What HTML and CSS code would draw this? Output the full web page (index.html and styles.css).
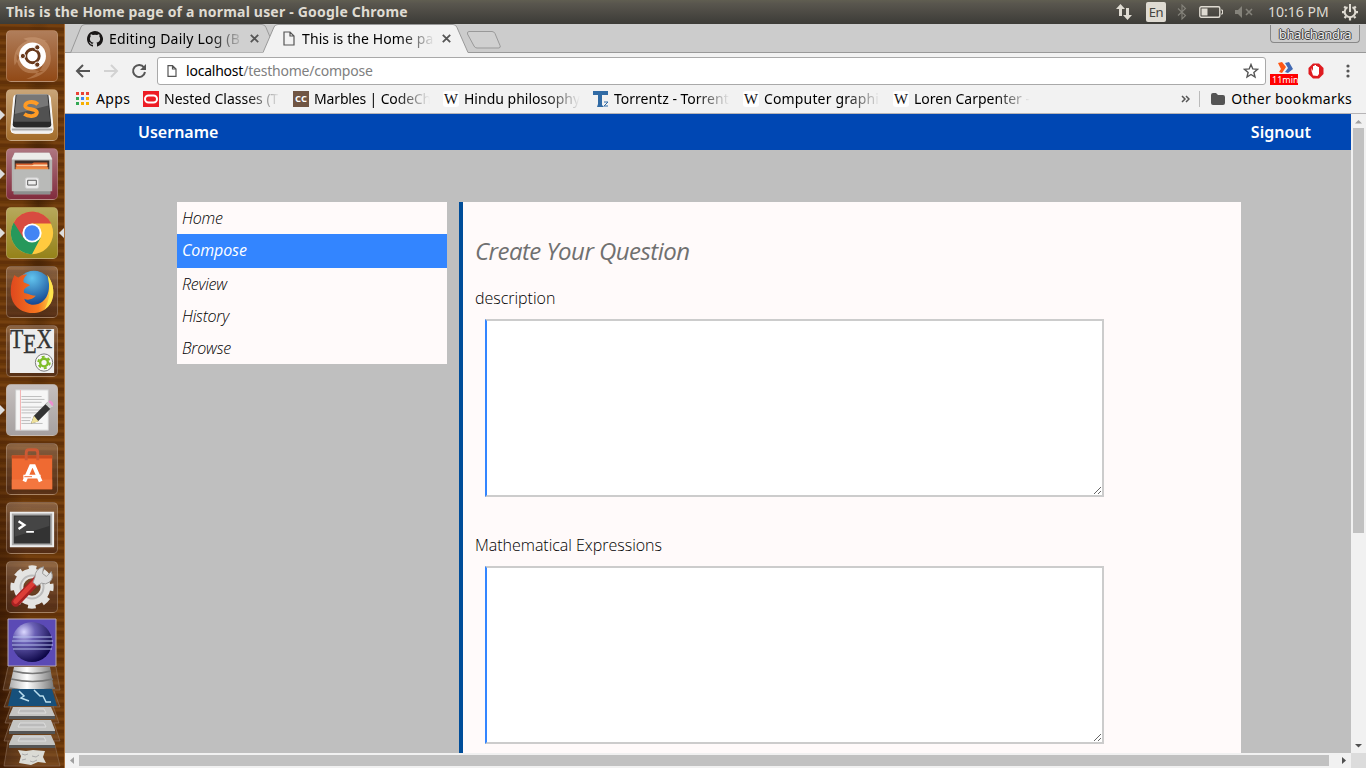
FILE: index.html
```html
<!DOCTYPE html>
<html lang="en">
<head>
<meta charset="utf-8">
<title>This is the Home page of a normal user</title>
<link rel="stylesheet" href="styles.css">
</head>
<body>
<div class="panel">
  <span class="panel-title">This is the Home page of a normal user - Google Chrome</span>
  <div class="indicators">
    <svg class="ind-net" width="18" height="18" viewBox="0 0 18 18"><path d="M5.500 1 1 6h3v7h3V6h3zM12.500 17 17 12h-3V5h-3v7H8z" fill="#dfdbd2"/></svg>
    <span class="lang">En</span>
    <svg class="ind-bt" width="10" height="16" viewBox="0 0 10 16"><path d="M1 4.500 8.500 11.500 5 15V1l3.500 3.500L1 11.500" fill="none" stroke="#85837b" stroke-width="1.100"/></svg>
    <svg class="ind-bat" width="24" height="12" viewBox="0 0 24 12"><rect x=".8" y=".8" width="20" height="10.400" rx="1.500" fill="none" stroke="#dfdbd2" stroke-width="1.400"/><path d="M2.500 2.500h6v7h-6z" fill="#dfdbd2"/><path d="M22 4h1.500v4H22" fill="none" stroke="#dfdbd2"/></svg>
    <svg class="ind-vol" width="18" height="12" viewBox="0 0 18 12"><path d="M0 4h3l4-4v12l-4-4H0z" fill="#85837b"/><path d="m11 3 6 6m0-6-6 6" stroke="#85837b" stroke-width="1.600"/></svg>
    <span class="clock">10:16 PM</span>
    <svg class="ind-gear" width="18" height="18" viewBox="0 0 18 18" fill="none" stroke="#dfdbd2"><path d="M6.500 4.200a5.300 5.300 0 1 0 5 0M9 1v8" stroke-width="2"/><path d="M9 15v2.500M1 9.200h2.200M14.800 9.200H17M3.500 15l1.600-1.600M13 13.400l1.500 1.600M3.200 3.500l1.700 1.700M14.800 3.500l-1.700 1.700" stroke-width="2.200"/></svg>
  </div>
</div>
<div class="desktop">
  <aside class="launcher">
    <svg class="tile t-dash" viewBox="0 0 52 52"><path d="M8 36C4 16 20 4 42 10 28 10 22 14 17 20M42 16c10 18-2 32-22 34 12-5 18-10 18-20M10 24c-1 16 9 24 28 18-10-1-17-3-21-9M17 8c20-6 32 6 27 22-1-8-6-13-13-15" fill="#ecc09b" opacity=".3"/><circle cx="26.500" cy="26" r="14" fill="#fff"/><circle cx="26.500" cy="26" r="7" fill="none" stroke="#68391c" stroke-width="3"/><g fill="#68391c" stroke="#fff"><circle cx="16.500" cy="26" r="2.700"/><circle cx="31.500" cy="17" r="2.700"/><circle cx="31.500" cy="35" r="2.700"/></g></svg>
    <svg class="tile t-sublime" viewBox="0 0 52 52"><path d="M7 8q0-3 4-3h30q4 0 4 3l3 33q0 4-4 4H8q-4 0-4-4z" fill="#eee" stroke="#fff"/><path d="M5 40h42v2H5z" fill="#aaa"/><path d="m9 5 34 0 3 31q0 3-4 3H10q-4 0-4-3z" fill="#292929"/><path d="M10 5h32l3 28H7z" fill="#515151"/><path d="M10 5h32l1 11-35 9z" fill="#777"/><path d="M32 15c-4-4-14-3-13 2 1 4 13 2 12 7-1 4-9 4-13 1" fill="none" stroke="#ff9b25" stroke-width="4"/></svg>
    <svg class="tile t-files" viewBox="0 0 52 52"><path d="M8 4h36l3 6v34H5V10z" fill="#b5b5b2"/><path d="M8 4h36l3 7H5z" fill="#ececea"/><path d="M8 12h36v10H8z" fill="#3b2d28"/><path d="M9 15h17l2-1h14v8H9z" fill="#dc6530"/><path d="M10 17h16l2-1h14v2H10z" fill="#ffddb3"/><path d="M9 19h34v4H9z" fill="#ee8c43"/><path d="M7 21h38v26H7z" fill="#b9bab8"/><path d="M7 44h38v3H7z" fill="#8d8f8e"/><rect x="19" y="30" width="14" height="11" rx="2" fill="#eee" stroke="#ccc"/><path d="M21.500 32.500h9v5h-9z" fill="#eee" stroke="#555"/></svg>
    <svg class="tile t-chrome" viewBox="0 0 52 52"><circle cx="26" cy="26" r="22" fill="#ffca3f"/><path d="M26 26 7 15A22 22 0 0 0 26 48L35 31z" fill="#26985b"/><path d="M7 15A22 22 0 0 1 46 16H26l-9 15z" fill="#d84b40"/><circle cx="26" cy="26" r="10" fill="#fff"/><circle cx="26" cy="26" r="8" fill="#4385f4"/></svg>
    <svg class="tile" viewBox="0 0 52 52"><defs><radialGradient id="globe" cx=".45" cy=".2" r=".7"><stop stop-color="#62c4ee"/><stop offset="1" stop-color="#164a94"/></radialGradient><linearGradient id="fox" x2="1"><stop stop-color="#df481e"/><stop offset=".65" stop-color="#f7771f"/><stop offset="1" stop-color="#ffe14c"/></linearGradient></defs><circle cx="28" cy="23" r="19" fill="url(#globe)"/><path d="M8 8C3 17 2 31 8 39c8 11 26 12 35 2 8-8 6-23 0-30 2 12 0 20-6 25-8 6-18 3-19-3 4 2 8 1 12-3-4 0-7-2-12-3-2-4 2-6 6-8-2-2-6-2-7-4 0-3 2-6 4-7-4-1-7 1-9 3-2-1-4-2-4-3z" fill="url(#fox)"/><path d="M42 8c7 10 8 20 3 30-2 3-4 5-6 6 5-8 7-20 3-36z" fill="#ffe54d"/></svg>
    <svg class="tile" viewBox="0 0 52 52"><path d="M3 3h46v46H3z" fill="#ededed"/><text x="3" y="23" class="tex-letter" textLength="44" lengthAdjust="spacingAndGlyphs">T<tspan dy="5">E</tspan><tspan dy="-5">X</tspan></text><circle cx="38.500" cy="38" r="9" fill="#f7f7f7" stroke="#777"/><circle cx="38.500" cy="38" r="4" fill="none" stroke="#7ebd28" stroke-width="2.500"/><circle cx="38.500" cy="38" r="6" fill="none" stroke="#7ebd28" stroke-width="2" stroke-dasharray="3.100 3.180"/></svg>
    <svg class="tile t-edit" viewBox="0 0 52 52"><path d="M9 5h34v42H9z" fill="#f6f6f6" stroke="#ccc"/><path d="M14 5v42" stroke="#f2b0b0"/><path d="M15 12h21M15 15h24M15 18h21M15 23h24M15 26h22M15 29h24M15 34h10M15 37h9M15 40h22" stroke="#bbb"/><path d="m25 40 3-8L42 18l5 5-15 15z" fill="#333"/><path d="m25 40 3-8 5 6z" fill="#eee19b"/><path d="m40 20 3-3 5 5-3 3z" fill="#ccc"/><path d="m43 17 2-1q4 2 3 5l-1 1z" fill="#ee8fd1"/></svg>
    <svg class="tile" viewBox="0 0 52 52"><path d="M5 12h42v35H5z" fill="#ef6a32"/><path d="M5 37h42v10H5z" fill="#f3763f"/><path d="M5 12h42v3H5z" fill="#c74b20"/><path d="M20 17V9q0-3 3-3h6q3 0 3 3v8" fill="none" stroke="#cc5934" stroke-width="3"/><path d="m18 39 7-16h3l7 16M17 34h18" fill="none" stroke="#fff" stroke-width="4"/><path d="M18 34h8" stroke="#ef6a32"/></svg>
    <svg class="tile" viewBox="0 0 52 52"><path d="M3 9h46v37H3z" fill="#eee"/><path d="M6 12h40v31H6z" fill="#333" stroke="#aaa" stroke-width="2"/><path d="M8 14h36v10L8 35z" fill="#454545"/><path d="m12 19 6 4-6 4" fill="none" stroke="#fff" stroke-width="2.500"/><path d="M20 30h8" stroke="#fff" stroke-width="2"/></svg>
    <svg class="tile" viewBox="0 0 52 52"><circle cx="26" cy="26" r="14" fill="none" stroke="#e4e4e2" stroke-width="10"/><circle cx="26" cy="26" r="20" fill="none" stroke="#e4e4e2" stroke-width="5" stroke-dasharray="8 7.700" stroke-dashoffset="4"/><circle cx="26" cy="26" r="12" fill="none" stroke="#bbb" stroke-width="2"/><path d="M9 42 32 18" stroke="#a82222" stroke-width="9" stroke-linecap="round"/><path d="M9 41 31 18" stroke="#dc3e38" stroke-width="5" stroke-linecap="round"/><path d="M29 16q0-9 9-11l-1 7 4 3 5-5q3 7-2 11-4 3-8 1l-5 3-4-4z" fill="#ddd" stroke="#999"/></svg>
    <svg class="stack" viewBox="0 0 65 155"><defs><radialGradient id="orb" cx=".3" cy=".25" r=".8"><stop stop-color="#dbd8ff"/><stop offset=".35" stop-color="#6a60b5"/><stop offset="1" stop-color="#0c0647"/></radialGradient><linearGradient id="metal" x2="1"><stop stop-color="#aaa"/><stop offset=".4" stop-color="#fff"/><stop offset="1" stop-color="#777"/></linearGradient></defs><path d="M8 6h48v47H8z" fill="#5b4ab5" stroke="#b8a9b4"/><circle cx="32" cy="29" r="20" fill="url(#orb)"/><path d="M13 24h39M12 28h41M12 32h41M13 36h39" stroke="#b6c0ed"/><path d="M8 54 3 77h57l-4-23M10 78l-6 16h56l-6-16M11 93l-6 17h54l-6-17M10 110l-6 18h56l-6-18M8 128l-4 25h56l-6-25" fill="#88644a44" stroke="#967a6588"/><path d="m14 54 36 0 4 22H9z" fill="url(#metal)"/><path d="M13 58q20 5 38 0M11 66q22 5 42 0M9 75q23 5 46 0" fill="none" stroke="#777" stroke-width="1.500"/><path d="M12 76h40l5 17H8z" fill="#17507b"/><path d="m19 78 5 5-3 2 8 3M34 77l6 6 3 0 3 6 5 0" fill="none" stroke="#bbdeee" stroke-width="1.500"/><path d="M13 94h38l4 9v2H9v-2zM13 107h38l4 10v2H9v-2zM13 122h38l4 9v2H9v-2z" fill="#c4c4c2"/><path d="M9 103h46v3H9zM9 118h46v3H9zM9 132h46v3H9z" fill="#555"/><path d="M20 96h24l2 4H18zM20 110h24l2 4H18zM20 124h24l2 4H18z" fill="#bbb" stroke="#ddd"/><path d="m18 137 8 1 7-1 12 1-2 6 3 6-8-1-7 3-12-2 2-7z" fill="#dbdbd5"/><path d="m22 141 3 1 3-1M32 143l4 1 3-2M22 147l4-1M30 148l3 1 4-2" fill="none" stroke="#aaa"/></svg>
    <i class="run r1"></i><i class="run r2"></i><i class="run r3"></i><i class="run r4"></i><i class="run focus"></i>
  </aside>
  <div class="browser">
    <div class="tabs">
      <div class="tab tab-back">
        <svg class="tab-shape" width="208" height="29" viewBox="0 0 208 29"><path d="M5.500 29 16 3Q17 .5 20 .5H197q3 0 4 3L208 20V29z" fill="#d0d0d0" stroke="#999"/></svg>
        <svg width="16" height="16" viewBox="0 0 16 16"><path fill="#191717" d="M8 0C3.600 0 0 3.600 0 8c0 3.500 2.300 6.500 5.500 7.600.4.100.5-.2.500-.4v-1.500c-2.200.5-2.700-.9-2.700-.9-.4-.9-.9-1.200-.9-1.200-.7-.5.100-.5.100-.5.800.1 1.200.8 1.200.8.700 1.200 1.900.9 2.300.7.100-.5.300-.9.500-1.100-1.800-.2-3.600-.9-3.600-4 0-.9.300-1.600.8-2.100-.1-.2-.4-1 .1-2.100 0 0 .7-.2 2.200.8a7.600 7.600 0 0 1 4 0c1.500-1 2.200-.8 2.200-.8.400 1.100.2 1.900.1 2.100.5.500.8 1.300.8 2.100 0 3.100-1.900 3.800-3.700 4 .3.300.6.800.6 1.500v2.200c0 .2.100.5.500.4A8 8 0 0 0 8 0"/></svg>
        <span class="tab-text fade">Editing Daily Log (B</span>
        <svg class="close" width="9" height="9" viewBox="0 0 9 9"><path d="m.8.800 7.400 7.400m0-7.400L.8 8.200" stroke="#555" stroke-width="1.800"/></svg>
      </div>
      <div class="tab tab-front">
        <svg class="tab-shape" width="208" height="30" viewBox="0 0 208 30"><path d="M0 28.500 11 3Q12 .5 15 .5H190q3 0 4 3L205 28.500V30H0z" fill="#f2f2f2"/><path d="M0 28.500 11 3Q12 .5 15 .5H190q3 0 4 3L205 28.500H208" fill="none" stroke="#999"/></svg>
        <svg width="12" height="15" viewBox="0 0 12 15"><path d="M1 1h6l4 4v9H1zM7 1v4h4" fill="none" stroke="#555" stroke-width="1.200"/></svg>
        <span class="tab-text fade">This is the Home pa</span>
        <svg class="close" width="9" height="9" viewBox="0 0 9 9"><path d="m.8.800 7.400 7.400m0-7.400L.8 8.200" stroke="#555" stroke-width="1.800"/></svg>
      </div>
      <svg class="new-tab" width="36" height="18" viewBox="0 0 36 18"><path d="M3 .500H26q2 0 3 2l5 12q1 2-1 2.500H11q-2 0-3-2L1.500 3Q1 .5 3 .5z" fill="#d0d0d0" stroke="#999"/></svg>
      <span class="profile">bhalchandra</span>
    </div>
    <div class="toolbar">
      <svg width="16" height="14" viewBox="0 0 16 14"><path d="M15 7H2m6-6L2 7l6 6" fill="none" stroke="#555" stroke-width="2"/></svg>
      <svg width="16" height="14" viewBox="0 0 16 14"><path d="M1 7h13M8 1l6 6-6 6" fill="none" stroke="#d2d2d2" stroke-width="2"/></svg>
      <svg width="16" height="16" viewBox="0 0 16 16"><path d="M13 4.500A6 6 0 1 0 14 9" fill="none" stroke="#555" stroke-width="2"/><path d="M15 1v6H9z" fill="#555"/></svg>
      <div class="omnibox">
        <svg width="10" height="12" viewBox="0 0 10 12"><path d="M1 .600h4.500L9 4v7.400H1zM5.500.600V4H9" fill="none" stroke="#555" stroke-width="1.200"/></svg>
        <span class="url">localhost<span class="path">/testhome/compose</span></span>
        <svg class="star" width="16" height="16" viewBox="0 0 16 16"><path d="m8 1.500 1.800 4.400 4.700.4-3.600 3.100 1.100 4.600L8 11.500 4 14l1.100-4.600L1.500 6.300l4.700-.4z" fill="none" stroke="#555" stroke-width="1.400"/></svg>
      </div>
      <div class="ext"><svg width="16" height="12" viewBox="0 0 16 12"><path d="m1 1 4-1 4 5-4 6-3-1 2-3z" fill="#ff5613"/><path d="m8 1 4-1 4 7-5 4-3-1 3-4z" fill="#426ab3"/></svg><span class="badge">11min</span></div>
      <svg width="16" height="16" viewBox="0 0 16 16"><path d="M5 .500h6L15.500 5v6L11 15.500H5L.5 11V5z" fill="#df1b20"/><path d="M5 12.500 3.500 8V5l1.500 3V3h1.500V2H8v1h1.500v1H11v7l-1.500 2z" fill="#fff"/></svg>
      <svg class="dots" width="4" height="14" viewBox="0 0 4 14" fill="#555"><circle cx="2" cy="2" r="1.600"/><circle cx="2" cy="7" r="1.600"/><circle cx="2" cy="12" r="1.600"/></svg>
    </div>
    <div class="bookmarks">
      <div class="bm apps"><svg width="14" height="14" viewBox="0 0 14 14"><path d="M0 0h3v3H0zM5 0h3v3H5zM10 0h3v3h-3z" fill="#ea4335"/><path d="M0 5h3v3H0zM0 10h3v3H0z" fill="#34a853"/><path d="M5 5h3v3H5z" fill="#4285f4"/><path d="M10 5h3v3h-3zM5 10h3v3H5zM10 10h3v3h-3z" fill="#f7b000"/></svg><span class="s-apps">Apps</span></div>
      <div class="bm"><svg width="16" height="16" viewBox="0 0 16 16"><path d="M0 0h16v16H0z" fill="#ed1c24"/><rect x="2" y="4.500" width="12" height="7" rx="3.500" fill="none" stroke="#fff" stroke-width="2"/></svg><span class="fade">Nested Classes (T</span></div>
      <div class="bm"><svg width="16" height="16" viewBox="0 0 16 16"><path d="M0 0h16v16H0z" fill="#705543"/><text x="2" y="11" class="cc" textLength="12" lengthAdjust="spacingAndGlyphs">CC</text></svg><span class="fade s-marbles">Marbles | CodeCh</span></div>
      <div class="bm"><svg width="16" height="16" viewBox="0 0 16 16"><rect width="16" height="16" rx="3" fill="#fff"/><text x="1" y="13" class="wiki" textLength="14" lengthAdjust="spacingAndGlyphs">W</text></svg><span class="fade">Hindu philosophy</span></div>
      <div class="bm"><svg width="16" height="16" viewBox="0 0 16 16"><path d="M0 0h15v4H9v10l2 2H4l1-3V4H0z" fill="#316ba5"/><path d="M11 11h4l-4 4h4" fill="none" stroke="#316ba5"/></svg><span class="fade">Torrentz - Torrent</span></div>
      <div class="bm"><svg width="16" height="16" viewBox="0 0 16 16"><rect width="16" height="16" rx="3" fill="#fff"/><text x="1" y="13" class="wiki" textLength="14" lengthAdjust="spacingAndGlyphs">W</text></svg><span class="fade s-computer">Computer graphi</span></div>
      <div class="bm"><svg width="16" height="16" viewBox="0 0 16 16"><rect width="16" height="16" rx="3" fill="#fff"/><text x="1" y="13" class="wiki" textLength="14" lengthAdjust="spacingAndGlyphs">W</text></svg><span class="fade s-loren">Loren Carpenter -</span></div>
      <div class="other"><svg width="9" height="8" viewBox="0 0 9 8"><path d="m1 1 3 3-3 3M5 1l3 3-3 3" fill="none" stroke="#555" stroke-width="1.500"/></svg><i class="rule"></i><svg width="14" height="12" viewBox="0 0 14 12"><path d="M0 2q0-2 2-2h3l2 2h5q2 0 2 2v6q0 2-2 2H2q-2 0-2-2z" fill="#555"/></svg><span class="s-other">Other bookmarks</span></div>
    </div>
    <div class="viewport">
      <div class="page">
        <header class="site-bar"><span class="username">Username</span><span class="signout">Signout</span></header>
        <div class="content">
          <nav class="menu"><a>Home</a><a class="active">Compose</a><a>Review</a><a>History</a><a>Browse</a></nav>
          <main class="form">
            <h1><span>Create Your Question</span></h1>
            <label>description</label>
            <textarea></textarea>
            <label>Mathematical Expressions</label>
            <textarea></textarea>
          </main>
        </div>
      </div>
      <div class="vbar"><svg width="15" height="14"><path d="M4 9.500h7L7.500 6z" fill="#a0a0a0"/></svg><i class="thumb"></i><svg class="down" width="15" height="14"><path d="M4 5h7L7.500 8.500z" fill="#505050"/></svg></div>
      <div class="hbar"><svg width="14" height="15"><path d="M9 4v7L5 7.500z" fill="#a0a0a0"/></svg><i class="thumb"></i><svg class="right" width="14" height="15"><path d="M5 4v7l4-3.500z" fill="#505050"/></svg></div>
      <div class="corner"></div>
    </div>
  </div>
</div>
</body>
</html>
```
FILE: styles.css
```css
* { box-sizing: border-box; }
body { margin: 0; width: 1366px; height: 768px; overflow: hidden; font-family: "Noto Sans", "Open Sans", sans-serif; color: #000; }
svg { display: block; flex: none; }
span { white-space: nowrap; }

.panel { height: 24px; display: flex; justify-content: space-between; align-items: center; padding: 0 7px 0 6px; color: #dfdbd2; background: linear-gradient(#605e51, #59564e 15%, #3c3b37); }
.panel-title { font-size: 14px; font-weight: 700; letter-spacing: .2px; line-height: 22px; }
.indicators { display: flex; align-items: center; }
.ind-net { margin-right: 13px; }
.lang { width: 20px; height: 20px; margin-right: 11px; border-radius: 2px; background: #dfdbd2; color: #45443e; font-size: 13px; line-height: 21px; text-align: center; letter-spacing: -.5px; }
.ind-bt { margin-right: 12px; }
.ind-bat { margin-right: 12px; }
.ind-vol { margin-right: 15px; }
.clock { width: 61px; margin-right: 12px; font-size: 14px; line-height: 22px; margin-top: -1px; }

.desktop { display: flex; height: 744px; }
.launcher { position: relative; width: 65px; flex: none; display: flex; flex-direction: column; gap: 7px; padding: 6px 0 0 6px; overflow: hidden; border-right: 1px solid #aa713d; background: radial-gradient(ellipse at 60% 25%, #32190399 0, transparent 30%), radial-gradient(ellipse at 0 88%, #2a1002cc 0, transparent 32%), repeating-linear-gradient(1deg, #613109 0 3px, #75400f 4px 6px, #683709 7px 9px); }
.tile { width: 52px; height: 52px; border: 1px solid #c9ad9466; border-radius: 5px; background: linear-gradient(#c8ad9a66, #6d4c3999 45%, #4a2a1d99); }
.t-dash { background: linear-gradient(#b07e5b, #914916); }
.t-sublime { background: linear-gradient(#c9a578, #a36c2a); }
.t-files { background: linear-gradient(#ae7680, #812b3d); }
.t-chrome { background: linear-gradient(#b7a95c, #958219); }
.t-edit { background: linear-gradient(#c5bfbe, #a6a1a1); }
.tex-letter { font: 28px "Liberation Serif", serif; fill: #333; stroke: #333; stroke-width: .4px; }
.stack { width: 65px; height: 155px; margin: -7px 0 0 -6px; }
.run { position: absolute; left: 0; border: solid transparent; border-width: 5px 0 5px 5px; border-left-color: #ddd; }
.r1 { top: 86px; } .r2 { top: 145px; } .r3 { top: 204px; } .r4 { top: 381px; }
.focus { left: auto; right: 0; top: 204px; border-width: 5px 5px 5px 0; border-right-color: #ddd; }

.browser { width: 1301px; display: flex; flex-direction: column; background: #f2f2f2; }
.tabs { position: relative; height: 29px; display: flex; background: #ccc; box-shadow: inset 0 -1px #999; }
.tab { position: relative; display: flex; align-items: center; height: 29px; font-size: 14px; }
.tab > * { position: relative; }
.tab > .tab-shape { position: absolute; left: 0; top: 0; }
.tab-back { width: 198px; padding-left: 22px; gap: 6px; }
.tab-front { width: 203px; padding-left: 20px; gap: 7px; z-index: 1; }
.tab-text { width: 135px; overflow: hidden; }
.tab-back .tab-text { letter-spacing: .2px; }
.tab-front .tab-text { width: 133px; letter-spacing: .1px; }
.fade { -webkit-mask-image: linear-gradient(90deg, #000 calc(100% - 34px), transparent); mask-image: linear-gradient(90deg, #000 calc(100% - 34px), transparent); }
.new-tab { margin: 7px 0 0 0; }
.profile { margin: 1px 6px 0 auto; width: 90px; height: 18px; border: 1px solid #888; border-top: 0; border-radius: 0 0 4px 4px; font-size: 13px; line-height: 19px; text-align: center; color: #eee; text-shadow: 1px 0 #444, -1px 0 #444, 0 1px #444, 0 -1px #444; letter-spacing: -.4px; }
.toolbar { height: 33px; display: flex; align-items: center; padding: 3px 15px 0 10px; gap: 12px; }
.toolbar > .omnibox { flex: none; width: 1109px; height: 28px; margin-left: -2px; display: flex; align-items: center; padding: 0 6px 0 9px; border: 1px solid #a9a9a9; border-radius: 3px; background: #fff; font-size: 14px; }
.url { margin: -2px 0 0 9px; letter-spacing: -.22px; }
.path { color: #808080; }
.star { margin-left: auto; }
.ext { position: relative; width: 28px; height: 28px; margin-left: -8px; padding: 5px 0 0 7px; }
.badge { position: absolute; left: 0; bottom: 0; width: 28px; height: 11px; overflow: hidden; background: red; color: #fff; font-size: 9px; line-height: 11px; padding-left: 2px; }
.ext + svg { margin-left: -2px; }
.dots { margin-left: 10px; margin-right: -1px; }
.bookmarks { height: 28px; display: flex; align-items: center; gap: 13px; padding: 0 14px 2px 11px; border-bottom: 1px solid #b6b4b6; font-size: 14px; }
.bm { display: flex; align-items: center; gap: 5px; width: 137px; flex: none; }
.bm span { flex: 1; overflow: hidden; }
.bm.apps { width: 55px; gap: 6px; margin-right: -1px; }
.bm .s-apps { letter-spacing: .4px; }
.bm .s-marbles { letter-spacing: -.15px; }
.bm .s-computer { letter-spacing: .15px; }
.bm .s-loren { letter-spacing: 0; }
.other { display: flex; align-items: center; margin-left: auto; }
.rule { width: 1px; height: 16px; background: #bbb; margin: 0 11px 0 9px; }
.other .s-other { margin-left: 6px; letter-spacing: .33px; }
.cc { font: bold 9px "Open Sans", sans-serif; fill: #fff; }
.wiki { font: 14px "Liberation Serif", serif; fill: #111; }

.viewport { height: 654px; display: grid; grid-template: 639px 15px / 1286px 15px; }
.page { background: #bfbfbf; overflow: hidden; font-family: "Open Sans", sans-serif; }
.site-bar { height: 36px; display: flex; justify-content: space-between; padding: 0 40px 0 73px; background: #0047b3; color: #fff; font: 600 16px/36px "Noto Sans", sans-serif; }
.content { display: flex; gap: 12px; padding: 52px 110px 0 112px; align-items: flex-start; }
.menu { width: 270px; background: #fffafa; font: italic 300 16px/32px "Open Sans", sans-serif; letter-spacing: -.22px; }
.menu a { display: block; height: 32px; padding-left: 5px; }
.menu .active { height: 34px; background: #3385ff; color: #fff; font-weight: 400; letter-spacing: -.1px; }
.form { flex: 1; height: 600px; border-left: 4px solid #004d99; background: #fffafa; padding: 32px 0 0 12px; font-weight: 300; font-size: 16px; }
h1 { margin: 0 0 18px; font: italic 400 24px/34px "Open Sans", sans-serif; letter-spacing: -.53px; color: #707070; }
label { display: block; height: 33px; line-height: 24px; letter-spacing: -.02px; }
textarea { display: block; width: 619px; height: 178px; margin: 0 0 36px 10px; border: 2px solid #ccc; border-left-color: #3385ff; background: #fff; }
.vbar { display: flex; flex-direction: column; background: #f1f1f1; }
.vbar .thumb { width: 11px; height: 405px; margin-left: 2px; background: #c1c1c1; }
.down { margin-top: auto; }
.hbar { display: flex; background: #f1f1f1; }
.hbar .thumb { width: 1250px; height: 11px; margin-top: 2px; background: #c1c1c1; }
.right { margin-left: auto; }
.corner { background: #dcdcdc; }
```
